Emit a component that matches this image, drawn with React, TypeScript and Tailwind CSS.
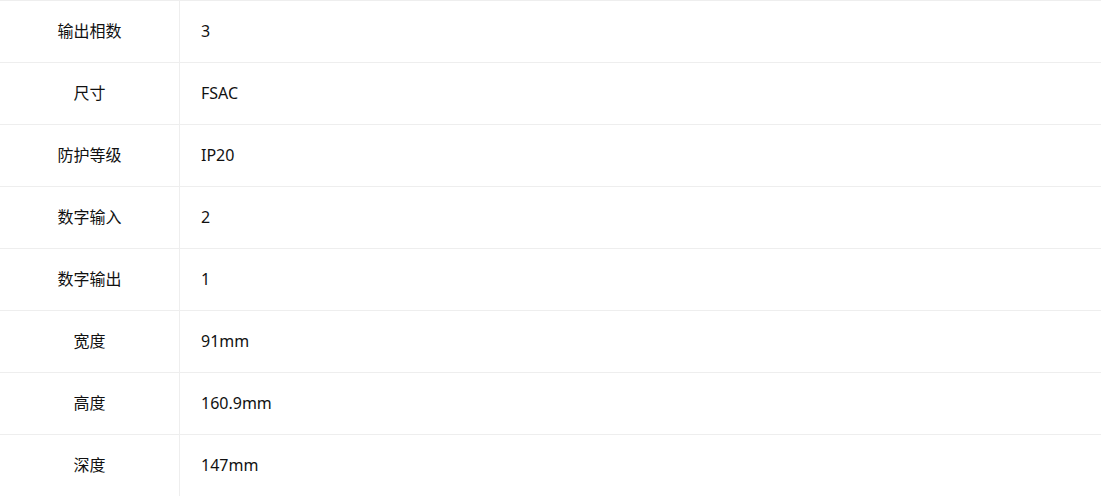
const rows: [string, string][] = [
  ["输出相数", "3"],
  ["尺寸", "FSAC"],
  ["防护等级", "IP20"],
  ["数字输入", "2"],
  ["数字输出", "1"],
  ["宽度", "91mm"],
  ["高度", "160.9mm"],
  ["深度", "147mm"],
];

export default function App() {
  return (
    <div
      className="w-[1101px] bg-white text-[16px] text-[#111]"
      style={{ fontFamily: '"Noto Sans", "Noto Sans CJK SC", sans-serif' }}
    >
      {rows.map(([label, value]) => (
        <div key={label} className="flex h-[62px] border-t border-[#eeeeee]">
          <div className="flex w-[180px] items-center justify-center border-r border-[#eeeeee] pb-[2px]">
            {label}
          </div>
          <div className="flex flex-1 items-center pl-[21px] pb-[2px]">{value}</div>
        </div>
      ))}
    </div>
  );
}
